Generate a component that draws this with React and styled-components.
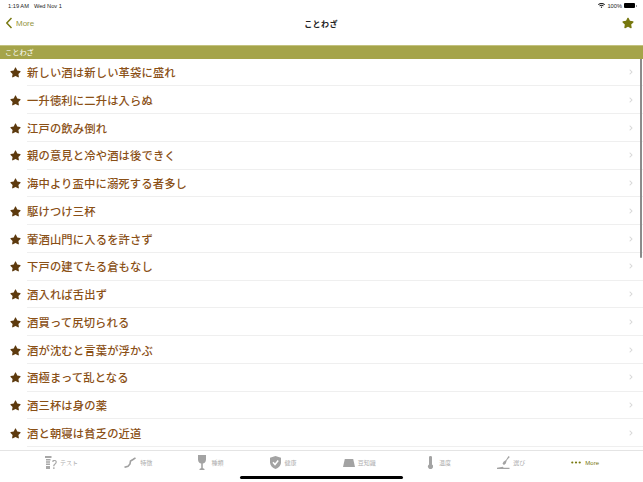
import styled, { createGlobalStyle } from "styled-components";
import { FaStar, FaChevronRight, FaWifi } from "react-icons/fa";

const items = [
  "新しい酒は新しい革袋に盛れ",
  "一升徳利に二升は入らぬ",
  "江戸の飲み倒れ",
  "親の意見と冷や酒は後できく",
  "海中より盃中に溺死する者多し",
  "駆けつけ三杯",
  "葷酒山門に入るを許さず",
  "下戸の建てたる倉もなし",
  "酒入れば舌出ず",
  "酒買って尻切られる",
  "酒が沈むと言葉が浮かぶ",
  "酒極まって乱となる",
  "酒三杯は身の薬",
  "酒と朝寝は貧乏の近道",
];

const TestIcon = () => (
  <svg width="12" height="13" viewBox="0 0 12 13" fill="#a8a8a8">
    <path d="M0 0h6.500v2H0zM1 3h4.500v1.500H1zM1 5.300h4v1.500H1zM1 7.600h4v1.500H1zM1 10h4v3H1z" />
    <path d="M7 5.500C7.400 3.500 11.800 3.500 11.800 6c0 2.200-2.400 2.200-2.400 4.300H8.200c0-2.600 2.400-2.600 2.400-4.300 0-1.200-1.900-1.200-2.300 0zM8.200 11.200h1.300V13H8.200z" />
  </svg>
);
const RegionIcon = () => (
  <svg width="12" height="11" viewBox="0 0 12 11" fill="none" stroke="#a0a0a0" strokeWidth="1.600">
    <path d="M0.500 10.300L4 9.200 6 7 6.500 4 9 2.500 11.500 0.800" />
  </svg>
);
const GlassIcon = () => (
  <svg width="8" height="15" viewBox="0 0 8 15" fill="#a3a3a3">
    <path d="M0 0h8v4.500c0 2.500-1.800 3.900-3.200 4.100V13l1.700 1v1h-5v-1l1.700-1V8.600C1.800 8.400 0 7 0 4.500z" />
  </svg>
);
const ShieldIcon = () => (
  <svg width="11" height="13" viewBox="0 0 11 13">
    <path fill="#a3a3a3" d="M5.500 0L11 1.800V6.500c0 3-2.500 5.300-5.500 6.500C2.500 11.800 0 9.500 0 6.500V1.800z" />
    <path fill="none" stroke="#fff" strokeWidth="1.500" d="M3 6.300l2 2.200 3.200-4" />
  </svg>
);
const BoxIcon = () => (
  <svg width="12" height="8" viewBox="0 0 12 8" fill="#a3a3a3">
    <path d="M1.800 0h8.400L12 8H0z" />
  </svg>
);
const ThermoIcon = () => (
  <svg width="11" height="13" viewBox="-6 0 11 13" fill="#a3a3a3">
    <path d="M1 1a1.500 1 0 0 1 3 0v7.500a2.500 2.500 0 1 1-3 0z" />
  </svg>
);
const PourIcon = () => (
  <svg width="13" height="13" viewBox="0 0 13 13" fill="#a3a3a3">
    <path d="M11.500 0l1.300 1-3 3.300-1 3.200-1.800 1.500-1.500-1.300 1-2 2.500-1.800zM0 11.800l6-1 .5 1H12.500V13H0z" />
  </svg>
);
const DotsIcon = () => (
  <svg width="10" height="3" viewBox="0 0 10 3" fill="#77780f">
    <circle cx="1.300" cy="1.500" r="1.100" />
    <circle cx="5" cy="1.500" r="1.100" />
    <circle cx="8.700" cy="1.500" r="1.100" />
  </svg>
);
const BackChevron = () => (
  <svg width="6" height="12" viewBox="0 0 6 12" fill="none" stroke="#77780f" strokeWidth="1.500">
    <path d="M5.500 1L.800 6l4.700 5" />
  </svg>
);

const tabs = [
  { label: "テスト", icon: <TestIcon />, gap: 3 },
  { label: "特徴", icon: <RegionIcon />, gap: 4 },
  { label: "種類", icon: <GlassIcon />, gap: 5 },
  { label: "健康", icon: <ShieldIcon />, gap: 4 },
  { label: "豆知識", icon: <BoxIcon />, gap: 3 },
  { label: "温度", icon: <ThermoIcon />, gap: 6 },
  { label: "選び", icon: <PourIcon />, gap: 3 },
  { label: "More", icon: <DotsIcon />, gap: 4, active: true },
];

export default function App() {
  return (
    <>
      <GlobalStyle />
      <Page>
        <StatusBar>
          <span>1:19 AM</span>
          <StatusDate>Wed Nov 1</StatusDate>
          <StatusRight>
            <FaWifi size={7} />
            <span>100%</span>
            <Battery />
          </StatusRight>
        </StatusBar>
        <NavBar>
          <BackLink>
            <BackChevron />
            <span>More</span>
          </BackLink>
          <Title>ことわざ</Title>
          <NavStar>
            <FaStar size={12} />
          </NavStar>
        </NavBar>
        <SectionHeader>ことわざ</SectionHeader>
        <List>
          {items.map((text) => (
            <Row key={text}>
              <RowStar>
                <FaStar size={11} />
              </RowStar>
              <RowBody>
                <RowText>{text}</RowText>
                <Chevron>
                  <FaChevronRight size={6} />
                </Chevron>
              </RowBody>
            </Row>
          ))}
          <ScrollThumb />
        </List>
        <TabBar>
          {tabs.map((tab) => (
            <Tab key={tab.label} $gap={tab.gap} $active={tab.active}>
              {tab.icon}
              <span>{tab.label}</span>
            </Tab>
          ))}
          <HomeIndicator />
        </TabBar>
      </Page>
    </>
  );
}

const GlobalStyle = createGlobalStyle`
  html, body {
    margin: 0;
    padding: 0;
    background: #fff;
  }
  body {
    font-family: "Liberation Sans", "Noto Sans CJK JP", sans-serif;
  }
  * {
    box-sizing: border-box;
  }
`;

const Page = styled.div`
  width: 643px;
  height: 482px;
  display: flex;
  flex-direction: column;
  overflow: hidden;
  background: #fff;
`;
const StatusBar = styled.div`
  height: 11px;
  flex: none;
  display: flex;
  align-items: center;
  padding: 0 7px 0 8px;
  font-size: 5.700px;
  color: #222;
`;
const StatusDate = styled.span`
  margin-left: 5px;
`;
const StatusRight = styled.div`
  margin-left: auto;
  display: flex;
  align-items: center;
  gap: 2px;
`;
const Battery = styled.div`
  width: 11px;
  height: 5px;
  margin-right: 1px;
  background: #000;
  border-radius: 1px;
  position: relative;
  &::after {
    content: "";
    position: absolute;
    right: -2px;
    top: 1.500px;
    width: 1px;
    height: 2px;
    background: #999;
  }
`;
const NavBar = styled.div`
  height: 34px;
  flex: none;
  display: grid;
  grid-template-columns: 1fr auto 1fr;
  align-items: center;
  padding: 0 9px 10px 8px;
`;
const BackLink = styled.div`
  display: flex;
  align-items: center;
  gap: 4px;
  margin-left: -2px;
  font-size: 8px;
  span {
    color: #94953f;
  }
`;
const Title = styled.div`
  font-size: 8px;
  font-weight: 700;
  color: #222;
  letter-spacing: 0.400px;
`;
const NavStar = styled.div`
  display: flex;
  justify-content: flex-end;
  color: #77780f;
`;
const SectionHeader = styled.div`
  height: 13.700px;
  flex: none;
  display: flex;
  align-items: center;
  padding-left: 5px;
  background: #a5a44a;
  border-top: 1px solid #c3c27f;
  font-size: 7.200px;
  color: #fff;
`;
const List = styled.div`
  flex: 1;
  min-height: 0;
  overflow: hidden;
  position: relative;
`;
const Row = styled.div`
  height: 27.750px;
  display: flex;
  align-items: stretch;
`;
const RowStar = styled.div`
  width: 27px;
  flex: none;
  display: flex;
  align-items: center;
  justify-content: center;
  padding-left: 3px;
  color: #5d3a0e;
`;
const RowBody = styled.div`
  flex: 1;
  display: flex;
  align-items: center;
  justify-content: space-between;
  padding-right: 9px;
  border-bottom: 1px solid #efefef;
`;
const RowText = styled.span`
  font-size: 11.300px;
  font-weight: 500;
  color: #8a5016;
  letter-spacing: 0.150px;
`;
const Chevron = styled.span`
  display: flex;
  color: #d8d8d8;
`;
const ScrollThumb = styled.div`
  position: absolute;
  top: -22px;
  right: 1.500px;
  width: 1.500px;
  height: 221px;
  background: #8b8b8b;
  border-radius: 1px;
`;
const TabBar = styled.div`
  height: 32px;
  flex: none;
  display: flex;
  align-items: flex-start;
  justify-content: space-between;
  padding: 4px 44px 0 45px;
  border-top: 1px solid #e4e4e4;
  position: relative;
`;
const Tab = styled.div`
  display: flex;
  align-items: center;
  gap: ${(p) => p.$gap}px;
  height: 15px;
  font-size: 6px;
  color: ${(p) => (p.$active ? "#77780f" : "#adadad")};
`;
const HomeIndicator = styled.div`
  position: absolute;
  left: 240px;
  bottom: 3px;
  width: 163px;
  height: 3px;
  border-radius: 2px;
  background: #000;
`;
